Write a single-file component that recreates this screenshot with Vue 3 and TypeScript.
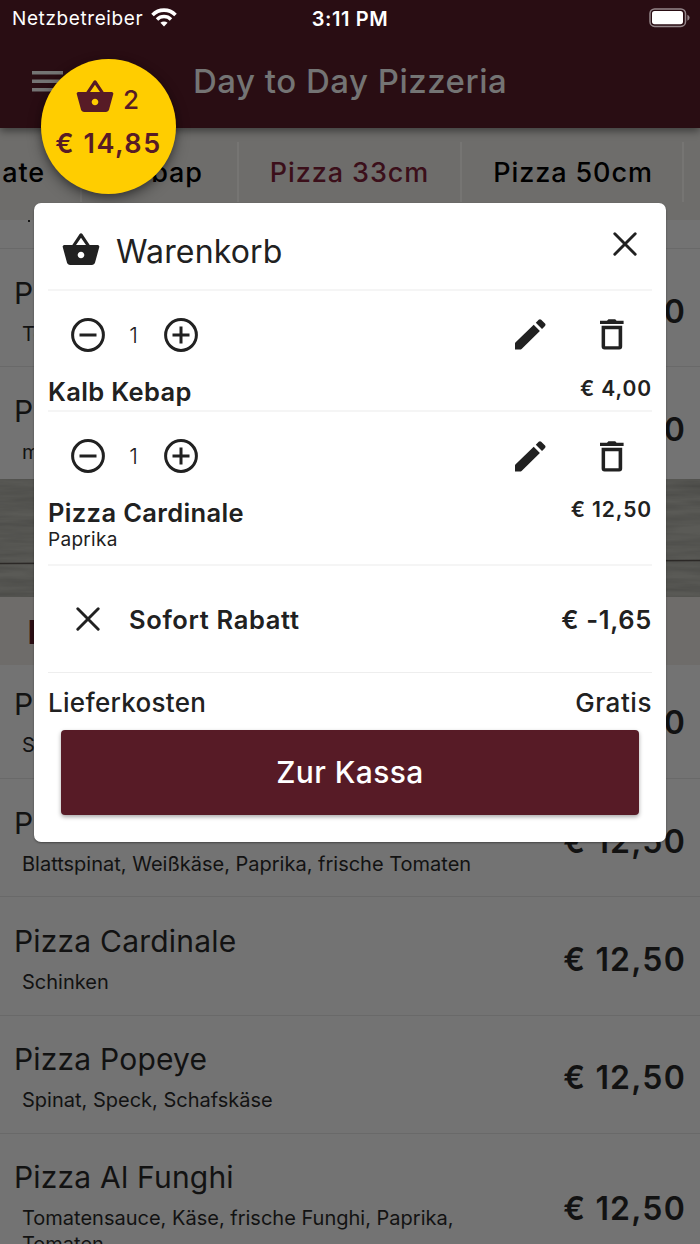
<script setup lang="ts">
interface MenuItem { name: string; note: string; price: string; kind?: string }
interface CartLine { name: string; extra?: string; price: string; qty: number }

const tabs = [
  { label: 'Salate', active: false, cls: 't1' },
  { label: 'Kebap', active: false, cls: 't2' },
  { label: 'Pizza 33cm', active: true, cls: 't3' },
  { label: 'Pizza 50cm', active: false, cls: 't4' },
]
const before: MenuItem[] = [
  { name: 'Pizza Margherita', note: 'Tomatensauce, Käse', price: '€ 9,50' },
  { name: 'Pizza Salami', note: 'mit Salami', price: '€ 10,50', kind: 'last' },
]
const after: MenuItem[] = [
  { name: 'Pizza Provinciale', note: 'Schinken, Mais', price: '€ 12,50', kind: 'first' },
  { name: 'Pizza Vegetaria', note: 'Blattspinat, Weißkäse, Paprika, frische Tomaten', price: '€ 12,50' },
  { name: 'Pizza Cardinale', note: 'Schinken', price: '€ 12,50' },
  { name: 'Pizza Popeye', note: 'Spinat, Speck, Schafskäse', price: '€ 12,50' },
  { name: 'Pizza Al Funghi', note: 'Tomatensauce, Käse, frische Funghi, Paprika, Tomaten', price: '€ 12,50', kind: 'tall' },
]
const cart: CartLine[] = [
  { name: 'Kalb Kebap', price: '€ 4,00', qty: 1 },
  { name: 'Pizza Cardinale', extra: 'Paprika', price: '€ 12,50', qty: 1 },
]
const basket = 'M17.21 9l-4.38-6.56c-.19-.28-.51-.42-.83-.42-.32 0-.64.14-.83.43L6.79 9H2c-.55 0-1 .45-1 1 0 .09.01.18.04.27l2.54 9.27c.23.84 1 1.46 1.92 1.46h13c.92 0 1.69-.62 1.93-1.46l2.54-9.27L23 10c0-.55-.45-1-1-1h-4.79zM9 9l3-4.4L15 9H9zm3 8c-1.1 0-2-.9-2-2s.9-2 2-2 2 .9 2 2-.9 2-2 2z'
</script>

<template>
  <div class="screen">
    <div class="top">
      <div class="status">
        <div class="carrier">
          <span>Netzbetreiber</span>
          <svg class="wifi" viewBox="0 0 26 19">
            <path d="M13 18.4 L9.400 14.800 A5.3 5.3 0 0 1 16.600 14.800 Z" fill="#fff" />
            <path d="M6 11.500 A9.8 9.8 0 0 1 20 11.500" fill="none" stroke="#fff" stroke-width="3.4" />
            <path d="M1.5 6.9 A16.2 16.2 0 0 1 24.5 6.9" fill="none" stroke="#fff" stroke-width="3.6" />
          </svg>
        </div>
        <span class="clock">3:11 PM</span>
        <svg class="battery" viewBox="0 0 42 20">
          <rect x="1" y="1" width="35.5" height="17.4" rx="4.6" fill="none" stroke="#94868a" stroke-width="1.5" />
          <rect x="3" y="3" width="31" height="13.2" rx="2.6" fill="#fff" />
          <path d="M38.4 6.8 Q40.6 7.8 40.6 9.8 Q40.6 11.8 38.4 12.8Z" fill="#94868a" />
        </svg>
      </div>
      <div class="appbar">
        <svg class="burger" viewBox="0 0 31 21"><path d="M0 1.8h31M0 10.3h31M0 18.8h31" stroke="#747474" stroke-width="3.4" /></svg>
        <h1>Day to Day Pizzeria</h1>
      </div>
    </div>

    <div class="tabs">
      <div v-for="t in tabs" :key="t.label" :class="['tab', t.cls, { active: t.active }]"><span>{{ t.label }}</span></div>
    </div>

    <div class="list">
      <div class="stub"><i></i></div>
      <div v-for="m in before" :key="m.name" :class="['row', m.kind]">
        <div class="info"><div class="name">{{ m.name }}</div><div class="note">{{ m.note }}</div></div>
        <div class="price">{{ m.price }}</div>
      </div>
      <svg class="wood" viewBox="0 0 700 118" preserveAspectRatio="none">
        <defs>
          <filter id="grain" x="0" y="0" width="100%" height="100%" color-interpolation-filters="sRGB">
            <feTurbulence type="fractalNoise" baseFrequency="0.015 0.16" numOctaves="3" seed="7" />
            <feColorMatrix values="0 0 0 0 0.24  0 0 0 0 0.24  0 0 0 0 0.23  0.7 0.4 0 0 -0.35" />
          </filter>
        </defs>
        <rect width="700" height="118" fill="#5a5a56" />
        <rect width="700" height="118" filter="url(#grain)" />
        <path d="M0 84.5L700 81.5" stroke="#2b2826" stroke-width="1.6" />
      </svg>
      <div class="category"><b>Pizza 33cm</b></div>
      <div v-for="m in after" :key="m.name" :class="['row', m.kind]">
        <div class="info"><div class="name">{{ m.name }}</div><div class="note">{{ m.note }}</div></div>
        <div class="price">{{ m.price }}</div>
      </div>
    </div>

    <div class="bubble">
      <div class="count">
        <svg viewBox="0 0 24 24"><path :d="basket" /></svg><span>2</span>
      </div>
      <div class="total">€ 14,85</div>
    </div>

    <div class="dialog">
      <div class="head">
        <svg class="bag" viewBox="0 0 24 24"><path :d="basket" /></svg>
        <h2>Warenkorb</h2>
        <svg class="close" viewBox="0 0 24 24"><path d="M1.800 1.800L22.200 22.200M22.200 1.800L1.800 22.200" /></svg>
      </div>
      <div v-for="(c, i) in cart" :key="c.name" :class="['line', 'line' + i]">
        <div class="tools">
          <svg class="round" viewBox="0 0 34 34"><circle cx="17" cy="17" r="15.4" /><path d="M8.5 17h17" /></svg>
          <span class="qty">{{ c.qty }}</span>
          <svg class="round" viewBox="0 0 34 34"><circle cx="17" cy="17" r="15.4" /><path d="M8.5 17h17M17 8.5v17" /></svg>
          <span class="grow"></span>
          <svg class="pen" viewBox="0 0 31 31"><path d="M0 30.500V24.500Q0 24 .4 23.600L18.700 5.700L24.900 11.900L6.600 30.100Q6.200 30.500 5.700 30.500ZM20.800 3.700L23.700 .8Q25 -.2 26.200 .8L30 4.500Q31 5.700 30 6.900L27 9.900Z" /></svg>
          <svg class="trash" viewBox="0 0 24 31"><path fill-rule="evenodd" d="M7 1.700L8.400 .3H15.200L16.600 1.700H23.600V5.100H0V1.700ZM1.600 6.700H22.200V27.600Q22.200 30.600 19.200 30.600H4.600Q1.600 30.600 1.600 27.600ZM5.100 10.300V27.200H18.600V10.300Z" /></svg>
        </div>
        <div class="desc">
          <div><div class="cname">{{ c.name }}</div><div v-if="c.extra" class="extra">{{ c.extra }}</div></div>
          <div class="cprice">{{ c.price }}</div>
        </div>
      </div>
      <div class="discount">
        <svg class="close" viewBox="0 0 24 24"><path d="M1.800 1.800L22.200 22.200M22.200 1.800L1.800 22.200" /></svg>
        <span class="dname">Sofort Rabatt</span>
        <span class="dval">€ -1,65</span>
      </div>
      <div class="delivery"><span class="fee">Lieferkosten</span><span>Gratis</span></div>
      <button class="pay">Zur Kassa</button>
    </div>
  </div>
</template>

<style>
body { overflow: hidden; }
</style>
<style scoped>
.screen { position: relative; width: 700px; height: 1244px; overflow: hidden; background: #737373; font-family: Inter, "Liberation Sans", sans-serif; color: #121212; font-feature-settings: "calt" 0; }
.screen * { box-sizing: border-box; }
svg { display: block; flex: none; }
.top { position: relative; z-index: 1; height: 128px; background: #290d13; box-shadow: 0 3px 8px rgba(0,0,0,.45); }
.status { display: grid; grid-template-columns: 1fr auto 1fr; height: 36px; align-items: center; color: #fff; font-size: 19px; line-height: 36px; padding: 0 9px 0 9px; }
.carrier { display: flex; align-items: center; gap: 8px; letter-spacing: .6px; padding: 1px 0 0 3px; }
.wifi { width: 26px; height: 19px; margin-top: -3px; }
.clock { font-size: 20px; font-weight: 600; letter-spacing: .6px; }
.battery { width: 42px; height: 20px; justify-self: end; margin-top: -2px; }
.appbar { display: flex; height: 92px; align-items: center; padding-left: 32px; }
.burger { width: 31px; height: 21px; margin-top: -2px; }
h1 { margin: -2px 0 0 130px; font-size: 33px; line-height: 40px; font-weight: 500; letter-spacing: .5px; color: #747474; white-space: nowrap; }
.tabs { display: flex; height: 92px; background: #6e6d6b; padding: 14px 0 18px; color: #000; font-size: 27px; font-weight: 500; letter-spacing: .9px; }
.tab { height: 60px; border-right: 2px solid #767573; display: flex; align-items: center; justify-content: center; white-space: nowrap; flex: none; padding-top: 1px; }
.t1 { width: 82px; justify-content: flex-end; padding-right: 35px; }
.t2 { width: 157px; }
.t3 { width: 223px; }
.t4 { width: 222px; padding-left: 2px; }
.active { color: #3b0f1a; }
.stub { height: 29px; border-bottom: 1px solid #696969; padding: 0 0 0 28px; }
.stub i { display: block; width: 2px; height: 2px; background: #151515; }
.row { display: flex; justify-content: space-between; height: 118.200px; border-bottom: 1px solid #696969; padding: 24.500px 14px 0 14px; }
.row.last { height: 112.100px; border-bottom: 0; }
.row.first { height: 113.900px; padding-top: 19.700px; }
.name { font-size: 30px; line-height: 38px; letter-spacing: .2px; white-space: nowrap; }
.note { font-size: 20px; line-height: 26px; letter-spacing: 0; width: 455px; margin: 9px 0 0 8px; }
.price { font-size: 32px; line-height: 40px; font-weight: 600; letter-spacing: 1.200px; margin-top: 18.400px; white-space: nowrap; }
.tall .price { margin-top: 31px; }
.wood { width: 700px; height: 118px; }
.category { height: 68px; background: #6e6c6a; padding: 22.500px 0 0 27.500px; }
.category b { display: block; font-size: 33px; line-height: 24px; color: #290d13; }
.bubble { position: absolute; z-index: 2; left: 41px; top: 59px; width: 135px; height: 135px; border-radius: 50%; background: #ffcd00; color: #571b26; box-shadow: 0 6px 14px rgba(0,0,0,.35), 0 2px 6px rgba(0,0,0,.25); font-weight: 500; }
.count { display: flex; align-items: center; padding: 17px 0 0 34px; height: 58px; font-size: 26px; gap: 8px; }
.count svg { width: 40px; height: 40px; fill: #571b26; }
.count span { padding-top: 6px; }
.total { text-align: center; font-size: 27px; line-height: 32px; margin-top: 11px; font-weight: 600; letter-spacing: 1.500px; white-space: nowrap; }
.dialog { position: absolute; z-index: 3; left: 34px; top: 203px; width: 632px; height: 638.500px; background: #fff; border-radius: 7px; padding: 0 14px; color: #212121; box-shadow: 0 1px 2px rgba(0,0,0,.4); }
.head { display: flex; height: 87.500px; border-bottom: 2px solid #f5f5f5; padding: 0 15px 0 13px; }
.bag { width: 40px; height: 40px; margin-top: 27px; fill: #212121; }
h2 { margin: 29px auto 0 15px; font-size: 32px; line-height: 40px; font-weight: 400; letter-spacing: .15px; }
.close { width: 24px; height: 24px; fill: none; stroke: #212121; stroke-width: 2.900; stroke-linecap: round; }
.head .close { margin-top: 29px; }
.line { border-bottom: 2px solid #f5f5f5; }
.line0 { height: 121.500px; }
.line1 { height: 154px; }
.tools { display: flex; height: 88px; align-items: center; padding: 0 28.500px 0 23px; }
.round { width: 34px; height: 34px; fill: none; stroke: #212121; stroke-width: 3; }
.qty { width: 59px; padding-right: 2px; text-align: center; font-size: 22px; font-weight: 300; }
.grow { flex: 1; }
.pen { width: 31px; height: 31px; fill: #212121; margin-right: 54px; }
.trash { width: 24px; height: 31px; fill: #212121; }
.desc { display: flex; justify-content: space-between; }
.cname { font-size: 25.500px; line-height: 26px; font-weight: 600; letter-spacing: .35px; white-space: nowrap; }
.extra { font-size: 19px; line-height: 24px; letter-spacing: .3px; margin-top: 2px; }
.cprice { font-size: 21px; line-height: 20px; font-weight: 600; letter-spacing: .9px; }
.discount { display: flex; align-items: center; height: 107px; border-bottom: 1px solid #eee; padding-left: 28px; font-size: 25.500px; font-weight: 600; letter-spacing: .65px; }
.dname { margin: 0 auto 0 29px; }
.delivery { display: flex; justify-content: space-between; height: 57px; line-height: 60px; font-size: 26px; font-weight: 500; letter-spacing: .55px; }
.fee { letter-spacing: .3px; }
.pay { display: block; width: 578px; height: 84.500px; margin: 0 0 0 13px; padding: 0; border: 0; border-radius: 4px; background: #571b26; color: #fff; font: 500 30px/84px Inter, sans-serif; letter-spacing: .4px; box-shadow: 0 2px 4px rgba(0,0,0,.35); }
</style>
